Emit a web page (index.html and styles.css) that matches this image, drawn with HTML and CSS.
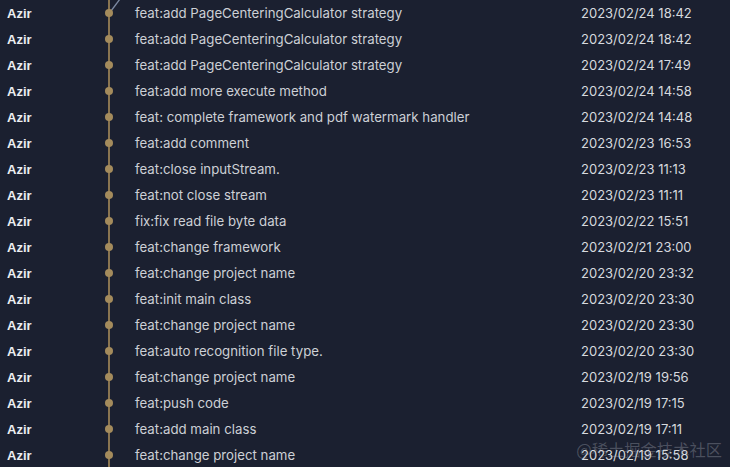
FILE: index.html
```html
<!DOCTYPE html>
<html>
<head>
<meta charset="utf-8">
<link rel="stylesheet" href="styles.css">
</head>
<body>
<div class="log">
  <div class="row"><div class="author">Azir</div><div class="graph first"><svg class="branch" width="20" height="14" viewBox="0 0 20 14"><line x1="1" y1="11" x2="10" y2="-1" /></svg><span class="dot"></span></div><div class="msg">feat:add PageCenteringCalculator strategy</div><div class="date">2023/02/24 18:42</div></div>
  <div class="row"><div class="author">Azir</div><div class="graph"><span class="dot"></span></div><div class="msg">feat:add PageCenteringCalculator strategy</div><div class="date">2023/02/24 18:42</div></div>
  <div class="row"><div class="author">Azir</div><div class="graph"><span class="dot"></span></div><div class="msg">feat:add PageCenteringCalculator strategy</div><div class="date">2023/02/24 17:49</div></div>
  <div class="row"><div class="author">Azir</div><div class="graph"><span class="dot"></span></div><div class="msg">feat:add more execute method</div><div class="date">2023/02/24 14:58</div></div>
  <div class="row"><div class="author">Azir</div><div class="graph"><span class="dot"></span></div><div class="msg">feat: complete framework and pdf watermark handler</div><div class="date">2023/02/24 14:48</div></div>
  <div class="row"><div class="author">Azir</div><div class="graph"><span class="dot"></span></div><div class="msg">feat:add comment</div><div class="date">2023/02/23 16:53</div></div>
  <div class="row"><div class="author">Azir</div><div class="graph"><span class="dot"></span></div><div class="msg">feat:close inputStream.</div><div class="date">2023/02/23 11:13</div></div>
  <div class="row"><div class="author">Azir</div><div class="graph"><span class="dot"></span></div><div class="msg">feat:not close stream</div><div class="date">2023/02/23 11:11</div></div>
  <div class="row"><div class="author">Azir</div><div class="graph"><span class="dot"></span></div><div class="msg">fix:fix read file byte data</div><div class="date">2023/02/22 15:51</div></div>
  <div class="row"><div class="author">Azir</div><div class="graph"><span class="dot"></span></div><div class="msg">feat:change framework</div><div class="date">2023/02/21 23:00</div></div>
  <div class="row"><div class="author">Azir</div><div class="graph"><span class="dot"></span></div><div class="msg">feat:change project name</div><div class="date">2023/02/20 23:32</div></div>
  <div class="row"><div class="author">Azir</div><div class="graph"><span class="dot"></span></div><div class="msg">feat:init main class</div><div class="date">2023/02/20 23:30</div></div>
  <div class="row"><div class="author">Azir</div><div class="graph"><span class="dot"></span></div><div class="msg">feat:change project name</div><div class="date">2023/02/20 23:30</div></div>
  <div class="row"><div class="author">Azir</div><div class="graph"><span class="dot"></span></div><div class="msg">feat:auto recognition file type.</div><div class="date">2023/02/20 23:30</div></div>
  <div class="row"><div class="author">Azir</div><div class="graph"><span class="dot"></span></div><div class="msg">feat:change project name</div><div class="date">2023/02/19 19:56</div></div>
  <div class="row"><div class="author">Azir</div><div class="graph"><span class="dot"></span></div><div class="msg">feat:push code</div><div class="date">2023/02/19 17:15</div></div>
  <div class="row"><div class="author">Azir</div><div class="graph"><span class="dot"></span></div><div class="msg">feat:add main class</div><div class="date">2023/02/19 17:11</div></div>
  <div class="row"><div class="author">Azir</div><div class="graph"><span class="dot"></span></div><div class="msg">feat:change project name</div><div class="date">2023/02/19 15:58</div></div>
  <div class="watermark">@稀土掘金技术社区</div>
</div>
</body>
</html>
```
FILE: styles.css
```css
html, body {
  margin: 0;
  padding: 0;
  background: #1b2030;
}
.log {
  position: relative;
  width: 730px;
  height: 467px;
  overflow: hidden;
  background: #1b2030;
  font-family: Inter, "Noto Sans", sans-serif;
  font-size: 13px;
}
.row {
  display: grid;
  grid-template-columns: 100px 35px 446px 1fr;
  height: 26px;
  align-items: center;
}
.author {
  padding-left: 7px;
  font-family: "Liberation Sans", Arial, sans-serif;
  font-weight: 700;
  font-size: 13px;
  color: #eceef2;
}
.graph {
  position: relative;
  height: 26px;
}
.graph::before {
  content: "";
  position: absolute;
  left: 8px;
  top: 0;
  bottom: 0;
  width: 2px;
  background: #8a7551;
}
.dot {
  position: absolute;
  left: 5px;
  top: 9px;
  width: 8px;
  height: 8px;
  border-radius: 50%;
  background: #a48b5c;
}
.branch {
  position: absolute;
  left: 10px;
  top: 0;
}
.branch line {
  stroke: #7d8aa3;
  stroke-width: 1.3;
}
.msg {
  color: #cdd0d6;
  font-size: 13.25px;
  white-space: nowrap;
}
.date {
  color: #d6d9de;
  white-space: nowrap;
}
.watermark {
  position: absolute;
  right: 8px;
  bottom: 6px;
  font-family: "Noto Sans CJK SC", sans-serif;
  font-size: 16.3px;
  color: rgba(200, 205, 215, 0.28);
}
```
